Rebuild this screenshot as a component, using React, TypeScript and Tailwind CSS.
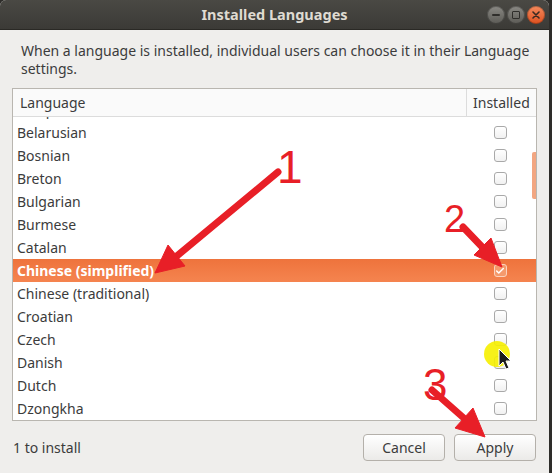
import { Check } from 'lucide-react';

type Row = { name: string; checked?: boolean; selected?: boolean };

const rows: Row[] = [
  { name: 'Basque' },
  { name: 'Belarusian' },
  { name: 'Bosnian' },
  { name: 'Breton' },
  { name: 'Bulgarian' },
  { name: 'Burmese' },
  { name: 'Catalan' },
  { name: 'Chinese (simplified)', checked: true, selected: true },
  { name: 'Chinese (traditional)' },
  { name: 'Croatian' },
  { name: 'Czech' },
  { name: 'Danish' },
  { name: 'Dutch' },
  { name: 'Dzongkha' },
];

const CheckBox = ({ checked, onDark }: { checked?: boolean; onDark?: boolean }) => (
  <span
    className={`flex h-[13px] w-[13px] items-center justify-center rounded-[3px] border ${
      onDark ? 'border-[#fbd2bd] bg-[#f59a6c]' : 'border-[#a9a9a9] bg-gradient-to-b from-white to-[#f1f1f1]'
    }`}
  >
    {checked && <Check className="h-[10px] w-[10px] text-white" strokeWidth={3.5} />}
  </span>
);

const WindowButton = ({ kind }: { kind: 'min' | 'max' | 'close' }) => {
  if (kind === 'close') {
    return (
      <span className="flex h-[18px] w-[18px] items-center justify-center rounded-full bg-gradient-to-b from-[#f48a5c] to-[#dd4f1c] shadow-[inset_0_0_0_1px_rgba(0,0,0,0.25)]">
        <svg width="8" height="8" viewBox="0 0 8 8">
          <path d="M1 1 L7 7 M7 1 L1 7" stroke="#3b2a22" strokeWidth="1.6" strokeLinecap="round" />
        </svg>
      </span>
    );
  }
  return (
    <span className="flex h-[18px] w-[18px] items-center justify-center rounded-full bg-gradient-to-b from-[#8a8984] to-[#5c5b56] shadow-[inset_0_0_0_1px_rgba(0,0,0,0.3)]">
      {kind === 'min' ? (
        <span className="h-[2px] w-[8px] rounded bg-[#2f2e2b]" />
      ) : (
        <span className="h-[8px] w-[8px] rounded-[1px] border-[1.5px] border-[#2f2e2b]" />
      )}
    </span>
  );
};

// red arrows, numbers and the cursor highlight drawn on top of the dialog
const Marks = () => (
  <svg className="pointer-events-none absolute inset-0" width="552" height="473" viewBox="0 0 552 473">
    <g fill="#e81f27" stroke="#e81f27">
      <line x1="278" y1="172" x2="172" y2="260" strokeWidth="7" strokeLinecap="round" />
      <polygon points="155,273 168,245 185,266" strokeWidth="1" />
      <line x1="463" y1="227" x2="486" y2="251" strokeWidth="7" strokeLinecap="round" />
      <polygon points="502,267 474,255 491,238" strokeWidth="1" />
      <line x1="432" y1="390" x2="466" y2="420" strokeWidth="7" strokeLinecap="round" />
      <polygon points="485,437 455,428 473,408" strokeWidth="1" />
    </g>
    <g fill="#e81f27" fontFamily="'Liberation Sans', sans-serif">
      <text x="277" y="183" fontSize="46">1</text>
      <text x="444" y="232" fontSize="38">2</text>
      <text x="423" y="400" fontSize="44">3</text>
    </g>
    <circle cx="497" cy="354" r="13" fill="#f6ef00" opacity="0.9" />
    <path
      d="M499 349 L499 366 L503 362 L506 369 L509 368 L506 361 L511 361 Z"
      fill="#1c1c1c"
      stroke="#ffffff"
      strokeWidth="1"
      strokeLinejoin="round"
    />
  </svg>
);

export default function App() {
  return (
    <div className="relative h-[473px] w-[552px] overflow-hidden bg-[#2e2d2a] font-['Noto_Sans',sans-serif] text-[14px] text-[#3c3c3c]">
      <div className="flex h-full w-[549px] flex-col overflow-hidden rounded-t-[6px] bg-[#efeeec]">
        {/* title bar */}
        <div className="relative flex h-[30px] shrink-0 items-center justify-center bg-gradient-to-b from-[#4a4944] to-[#3b3a36] shadow-[inset_0_-1px_0_#2a2925]">
          <span className="text-[14.5px] font-bold text-[#dfdbd2]">Installed Languages</span>
          <div className="absolute right-[4px] top-[6px] flex gap-[2px]">
            <WindowButton kind="min" />
            <WindowButton kind="max" />
            <WindowButton kind="close" />
          </div>
        </div>

        <div className="flex flex-1 flex-col px-[12px]">
          <p className="pl-[9px] pt-[12px] leading-[18px]">
            When a language is installed, individual users can choose it in their Language settings.
          </p>

          {/* language list */}
          <div className="relative mt-[10px] flex h-[333px] w-[525px] flex-col border border-[#b9b6b0] bg-white">
            <div className="relative z-10 flex h-[28px] shrink-0 border-b border-[#dcdcdc] bg-[#fafafa]">
              <div className="flex flex-1 items-center pl-[7px]">Language</div>
              <div className="flex w-[70px] items-center border-l border-[#dcdcdc] pl-[6px]">Installed</div>
            </div>
            <div className="flex-1 overflow-hidden">
              <div className="-mt-[19px]">
                {rows.map((row) => (
                  <div
                    key={row.name}
                    className={`flex h-[23px] items-center ${
                      row.selected ? 'bg-gradient-to-b from-[#ee733c] to-[#f5844f] font-bold text-white' : ''
                    }`}
                  >
                    <span className="flex-1 pl-[4px]">{row.name}</span>
                    <span className="flex w-[70px] justify-center pr-[2px]">
                      <CheckBox checked={row.checked} onDark={row.selected} />
                    </span>
                  </div>
                ))}
              </div>
            </div>
            {/* scrollbar thumb */}
            <span className="absolute right-0 top-[63px] h-[47px] w-[4px] rounded-l-[2px] bg-[#f2a681]" />
          </div>

          <div className="flex flex-1 items-center justify-between pl-[1px] pr-[1px]">
            <span>1 to install</span>
            <div className="flex gap-[9px]">
              <button className="h-[27px] w-[82px] rounded-[4px] border border-[#b4b0aa] bg-gradient-to-b from-white to-[#ebeae8] text-[14px] text-[#3c3c3c]">
                Cancel
              </button>
              <button className="h-[27px] w-[82px] rounded-[4px] border border-[#b4b0aa] bg-gradient-to-b from-white to-[#ebeae8] text-[14px] text-[#3c3c3c]">
                Apply
              </button>
            </div>
          </div>
        </div>
      </div>
      <Marks />
    </div>
  );
}
